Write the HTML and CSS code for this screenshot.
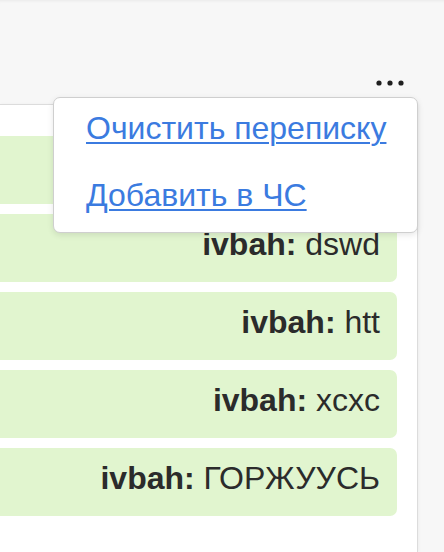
FILE: index.html
```html
<!DOCTYPE html>
<html lang="ru">
<head>
<meta charset="utf-8">
<title>Чат</title>
<link rel="stylesheet" href="styles.css">
</head>
<body>
<div class="page">
  <header class="topbar">
    <button class="more" aria-label="Меню">
      <svg width="28" height="6" viewBox="0 0 28 6"><circle cx="3" cy="3" r="2.6"/><circle cx="14" cy="3" r="2.6"/><circle cx="25" cy="3" r="2.6"/></svg>
    </button>
  </header>
  <main class="panel">
    <div class="messages">
      <div class="msg"><b>ivbah:</b> hi</div>
      <div class="msg"><b>ivbah:</b> dswd</div>
      <div class="msg"><b>ivbah:</b> htt</div>
      <div class="msg"><b>ivbah:</b> xcxc</div>
      <div class="msg"><b>ivbah:</b> ГОРЖУУСЬ</div>
    </div>
  </main>
  <div class="dropdown">
    <a href="#" class="item">Очистить переписку</a>
    <a href="#" class="item">Добавить в ЧС</a>
  </div>
</div>
</body>
</html>
```
FILE: styles.css
```css
html, body {
  margin: 0;
  padding: 0;
}
body {
  background: #f7f7f7;
  font-family: "Liberation Sans", Arial, sans-serif;
  color: #2b2b2b;
  height: 552px;
  overflow: hidden;
}
.page {
  position: relative;
  height: 552px;
  box-shadow: inset 0 3px 3px -2px rgba(0,0,0,0.06);
}
.topbar {
  height: 104px;
  display: flex;
  justify-content: flex-end;
  align-items: flex-end;
  padding-right: 40px;
  box-sizing: border-box;
  padding-bottom: 18px;
}
.more {
  border: 0;
  background: none;
  padding: 0;
  width: 28px;
  height: 6px;
  display: block;
}
.more svg {
  display: block;
  fill: #1f1f1f;
}
.panel {
  width: 418px;
  height: 448px;
  box-sizing: border-box;
  background: #fff;
  border-top: 1px solid #dcdcdc;
  border-right: 1px solid #dcdcdc;
  box-shadow: 1px 0 3px rgba(0,0,0,0.04);
  padding: 31px 20px 0 0;
}
.messages {
  display: flex;
  flex-direction: column;
  gap: 10px;
  margin-left: -12px;
}
.msg {
  background: #e1f5cf;
  border-radius: 7px;
  height: 68px;
  box-sizing: border-box;
  padding: 12px 17px 20px 16px;
  font-size: 32px;
  line-height: 36px;
  text-align: right;
  color: #2b2b2b;
  white-space: nowrap;
}
.msg b {
  font-weight: bold;
}
.dropdown {
  position: absolute;
  left: 53px;
  top: 97px;
  width: 365px;
  box-sizing: border-box;
  background: #fff;
  border: 1px solid #cfcfcf;
  border-radius: 7px;
  box-shadow: 0 2px 6px rgba(0,0,0,0.10);
  display: flex;
  flex-direction: column;
}
.item {
  display: block;
  height: 67px;
  box-sizing: border-box;
  padding: 12px 20px 19px 32px;
  font-size: 32px;
  line-height: 36px;
  color: #3b7be0;
  text-decoration: underline;
  text-decoration-thickness: 2px;
  text-underline-offset: 3px;
  white-space: nowrap;
}
```
